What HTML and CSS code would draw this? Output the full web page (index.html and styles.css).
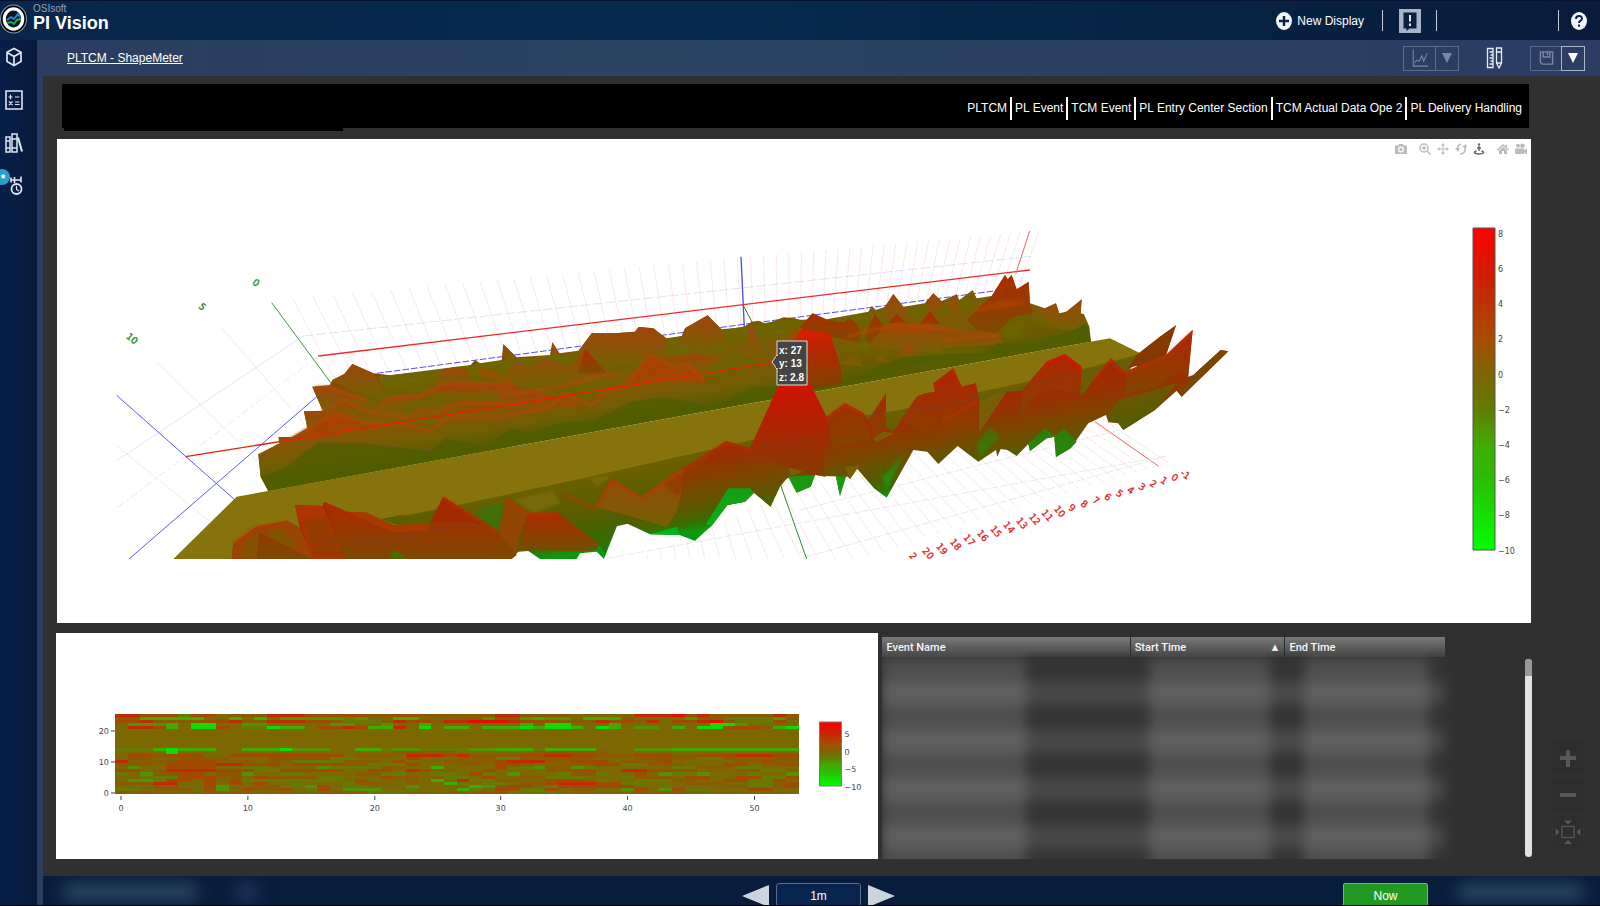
FILE: index.html
```html
<!DOCTYPE html>
<html lang="en">
<head>
<meta charset="utf-8">
<title>PI Vision</title>
<link rel="stylesheet" href="styles.css">
</head>
<body>
<div class="app">
  <header class="topbar">
    <svg class="logo" viewBox="0 0 28 30" aria-hidden="true">
      <ellipse cx="13.500" cy="15" rx="13.500" ry="14.500" fill="#8a9aa8"/>
      <ellipse cx="13.500" cy="15" rx="12.500" ry="13.500" fill="#000"/>
      <ellipse cx="13.500" cy="15" rx="10.800" ry="11.800" fill="#fff"/>
      <ellipse cx="13.500" cy="15" rx="7.600" ry="8.400" fill="#0b1424"/>
      <path d="M7 16l4-3 3 2 4-5 2 3" fill="none" stroke="#2f8be0" stroke-width="1.800"/>
      <path d="M7 19l4-1 3 2 3-4 4-1" fill="none" stroke="#22b04a" stroke-width="2"/>
    </svg>
    <div class="brand"><span class="brand-small">OSIsoft</span><span class="brand-name">PI Vision</span></div>
    <div class="topbar-actions">
      <button class="new-display">
        <svg viewBox="0 0 16 18"><ellipse cx="8" cy="9" rx="8" ry="9" fill="#f2f5f8"/><path d="M8 4v10M3 9h10" stroke="#0a2345" stroke-width="2.400"/></svg>
        New Display
      </button>
      <span class="rule"></span>
      <button class="alert" aria-label="Messages">
        <svg viewBox="0 0 22 24"><path d="M0 0h22v24H0z" fill="#a9b5c4"/><path d="M4.500 3.500h13v16h-7l-3 2.500v-2.500h-3z" fill="#0a2140"/><path d="M11 6v6.500M11 14.500v2.500" stroke="#e6ebf2" stroke-width="2"/></svg>
      </button>
      <span class="rule"></span>
      <span class="rule rule-far"></span>
      <button class="help" aria-label="Help">
        <svg viewBox="0 0 16 18"><ellipse cx="8" cy="9" rx="8" ry="9" fill="#f2f5f8"/><path d="M5 7c0-4 6-4 6-.500 0 2-3 2-3 4.500M8 12.500v2.200" fill="none" stroke="#0a2345" stroke-width="2"/></svg>
      </button>
    </div>
  </header>

  <div class="body">
    <nav class="rail" aria-label="Panels">
      <button aria-label="Assets"><svg viewBox="0 0 18 20"><path d="M9 1.500l7 3.800v9.200l-7 4-7-4V5.300zM2 5.500l7 4 7-4M9 9.500v9" fill="none" stroke="#dfe7f2" stroke-width="1.700"/></svg></button>
      <button aria-label="Calculations"><svg viewBox="0 0 18 20"><path d="M1 1h16v18H1z" fill="none" stroke="#dfe7f2" stroke-width="1.600"/><path d="M3.500 7h4M5.500 4.800v4.400M10 7h4.500M4 11.500l3.500 3.500M7.500 11.500L4 15M10 12h4.500M10 14.500h4.500" stroke="#dfe7f2" stroke-width="1.200"/></svg></button>
      <button aria-label="Library"><svg viewBox="0 0 18 20"><path d="M1 4h4v15H1zM7 1h5v18H7zM1 8h4M7 6h5M7 15h5M1 15h4" fill="none" stroke="#dfe7f2" stroke-width="1.500"/><path d="M13 4.500l4 14" stroke="#dfe7f2" stroke-width="2"/></svg></button>
      <button class="events" aria-label="Events"><svg viewBox="0 0 18 20"><path d="M6 1.500v5M16 .500v6M6 4h10M9.500 1v6" stroke="#dfe7f2" stroke-width="1.600"/><circle cx="11.500" cy="13" r="5" fill="none" stroke="#dfe7f2" stroke-width="1.800"/><path d="M11.500 10v3.500l2.500 1.500" fill="none" stroke="#dfe7f2" stroke-width="1.200"/></svg><span class="badge">*</span></button>
    </nav>

    <main class="workspace">
      <div class="toolbar">
        <a class="crumb" href="#">PLTCM - ShapeMeter</a>
        <div class="split dim">
          <button aria-label="Trend"><svg viewBox="0 0 20 20"><path d="M2.500 0v18.500H19M4 15l2-3 3 1 3-6 2 6 4-9" fill="none" stroke="currentColor" stroke-width="1.200"/></svg></button>
          <button aria-label="Trend options"><svg viewBox="0 0 10 10"><path d="M0 0h10L5 10z" fill="currentColor"/></svg></button>
        </div>
        <button class="design" aria-label="Design mode"><svg viewBox="0 0 18 22"><path d="M1.500 1.500h5.500v19H1.500zM3.500 5H7M4.500 8H7M3.500 11H7M4.500 14H7M3.500 17H7M10.500 1h5v15l-2.500 5-2.500-5zM10.500 5h5M10.500 16h5" fill="none" stroke="#e6edf6" stroke-width="1.300"/></svg></button>
        <div class="split save">
          <button class="dim" aria-label="Save"><svg viewBox="0 0 16 16"><path d="M1.500 1.500h13v13h-11l-2-2zM4.500 1.500v5.500h7V1.500M9 2v3" fill="none" stroke="currentColor" stroke-width="1.500"/></svg></button>
          <button class="save-more" aria-label="Save options"><svg viewBox="0 0 10 10"><path d="M0 0h10L5 10z" fill="currentColor"/></svg></button>
        </div>
      </div>

      <div class="canvas">
        <nav class="links" aria-label="Displays">
          <a href="#">PLTCM</a><a href="#">PL Event</a><a href="#">TCM Event</a><a href="#">PL Entry Center Section</a><a href="#">TCM Actual Data Ope 2</a><a href="#">PL Delivery Handling</a>
        </nav>

        <section class="panel surface" aria-label="Shape surface">
          <div class="modebar">
            <button class="apart" aria-label="Download"><svg viewBox="0 0 12 12"><path d="M0 2.500h3l1-1.500h4l1 1.500h3v8.500H0z" fill="#bbb"/><circle cx="6" cy="6.500" r="3" fill="#fff"/><circle cx="6" cy="6.500" r="1.700" fill="#bbb"/></svg></button>
            <button aria-label="Zoom"><svg viewBox="0 0 12 12"><circle cx="5" cy="5" r="4" fill="none" stroke="#bbb" stroke-width="1.500"/><path d="M3 5h4M5 3v4M8 8l3.500 3.500" stroke="#bbb" stroke-width="1.500"/></svg></button>
            <button aria-label="Pan"><svg viewBox="0 0 12 12"><path d="M6 1v10M1 6h10" stroke="#bbb"/><path d="M6 0l2 2.500H4zM6 12l2-2.500H4zM0 6l2.500-2v4zM12 6L9.500 4v4z" fill="#bbb"/></svg></button>
            <button aria-label="Orbit"><svg viewBox="0 0 12 12"><path d="M6 1C2 2 2 6 3 8M5 11c4 0 6-3 5-7" fill="none" stroke="#bbb" stroke-width="1.700"/><path d="M0 5l3 4 2-4zM7 4l4-3 1 4zM5 1h4" fill="#bbb"/></svg></button>
            <button class="apart" aria-label="Turntable"><svg viewBox="0 0 12 12"><circle cx="6" cy="1.500" r="1.200" fill="#666"/><path d="M6 3v5M4 5h4" stroke="#666" stroke-width="1.500"/><path d="M3.500 8C0 9 1 11 6 11s6-2 2.500-3" fill="none" stroke="#666" stroke-width="1.500"/></svg></button>
            <button aria-label="Reset"><svg viewBox="0 0 12 12"><path d="M6 1L0 6.500l1 1L6 3l5 4.500 1-1-2-2V1.500H8.500v1.800zM6 4L2 7.500V11h3V8h2v3h3V7.500z" fill="#bbb"/></svg></button>
            <button aria-label="Reset camera"><svg viewBox="0 0 12 12"><circle cx="3" cy="2.800" r="2" fill="#bbb"/><circle cx="7.500" cy="2.800" r="2.300" fill="#bbb"/><path d="M0 5.500h9v1.500l3-1.500v6L9 9.500V11H0z" fill="#bbb"/></svg></button>
          </div>
          <svg class="plot" viewBox="57 139 1474 484" role="img" aria-label="3D surface of shape deviation">
            <defs>
              <clipPath id="scene"><path d="M0 0H3400V1017H0z"/></clipPath>
              <filter id="soft" x="-20%" y="-20%" width="140%" height="140%"><feGaussianBlur stdDeviation="5"/></filter>
              <linearGradient id="bar" x1="0" y1="0" x2="0" y2="1"><stop offset="0" stop-color="#f00"/><stop offset=".16" stop-color="#cc2000"/><stop offset=".34" stop-color="#a84c00"/><stop offset=".46" stop-color="#7b6600"/><stop offset=".56" stop-color="#627c00"/><stop offset=".68" stop-color="#3fae00"/><stop offset=".76" stop-color="#30b800"/><stop offset="1" stop-color="#0f0"/></linearGradient>
              <linearGradient id="rear" gradientUnits="userSpaceOnUse" x1="0" y1="600" x2="53" y2="894"><stop offset="0" stop-color="#884600"/><stop offset=".3" stop-color="#7a5c06"/><stop offset=".6" stop-color="#7e5a06"/><stop offset="1" stop-color="#545c00"/></linearGradient>
              <linearGradient id="ridge" gradientUnits="userSpaceOnUse" x1="0" y1="690" x2="37" y2="900"><stop offset="0" stop-color="#a84200"/><stop offset=".35" stop-color="#8a5406"/><stop offset=".65" stop-color="#705e04"/><stop offset="1" stop-color="#4c5a00"/></linearGradient>
              <linearGradient id="front" gradientUnits="userSpaceOnUse" x1="0" y1="960" x2="51" y2="1245"><stop offset="0" stop-color="#ac2200"/><stop offset=".3" stop-color="#983000"/><stop offset=".55" stop-color="#784800"/><stop offset=".75" stop-color="#5c5800"/><stop offset=".9" stop-color="#3c6c00"/><stop offset="1" stop-color="#0a9a12"/></linearGradient>
              <linearGradient id="red" x1="0" y1="0" x2="0" y2="1"><stop offset="0" stop-color="#b62400"/><stop offset="1" stop-color="#7c4800"/></linearGradient>
              <linearGradient id="hot" x1="0" y1="0" x2="0" y2="1"><stop offset="0" stop-color="#f01000"/><stop offset=".3" stop-color="#c81400"/><stop offset="1" stop-color="#843c00"/></linearGradient>
              <linearGradient id="rust" x1="0" y1="0" x2="0" y2="1"><stop offset="0" stop-color="#a04408"/><stop offset="1" stop-color="#746206"/></linearGradient>
              <linearGradient id="moss" gradientUnits="userSpaceOnUse" x1="0" y1="1030" x2="36" y2="1230"><stop offset="0" stop-color="#6a6000"/><stop offset=".6" stop-color="#545e00"/><stop offset="1" stop-color="#306e04"/></linearGradient>
              <linearGradient id="green" x1="0" y1="0" x2="0" y2="1"><stop offset="0" stop-color="#2f7c08"/><stop offset="1" stop-color="#00b61c"/></linearGradient>
            </defs>
            <g transform="translate(100 220) scale(.33333)">
              <g clip-path="url(#scene)" fill="none" stroke-width="2">
                <g id="grid" stroke="#f8d6dc" stroke-dasharray="14 2"></g>
                <path d="M365 323L620 620M168 423L480 730M50 677L330 905" stroke="#dde6dc"/>
                <path d="M50 722L610 348" stroke="#d5d5ee"/>
                <path d="M52 863L660 405" stroke="#dbe0cf" stroke-dasharray="24 10 8 10"/>
                <path d="M610 348L2800 108" stroke="#d0d0f6" stroke-dasharray="30 8"/>
                <path d="M830 460L2690 212" stroke="#5050f0" stroke-width="3" stroke-dasharray="20 6"/>
                <path d="M515 248L695 492" stroke="#3c9a3c" stroke-width="3"/>
                <path d="M50 526L405 840M87 1017L700 487" stroke="#5a5af0" stroke-width="3"/>
                <path d="M655 408L2790 150" stroke="#f02828" stroke-width="4"/>
                <path d="M2789 33L2748 160M2985 605L3175 738" stroke="#ee6a6a" stroke-width="3"/>
                <path d="M1520 1015L3200 708M2100 870L3060 630M2120 1010L3200 708" stroke="#dde0dc" stroke-dasharray="24 6"/>
                <path d="M1923 110L1933 325" stroke="#4a4af0" stroke-width="4"/>
                <path d="M2040 790L2120 1017" stroke="#2d8a2d" stroke-width="3"/>
              </g>
              <g clip-path="url(#scene)">
                <path fill="url(#rear)" d="M505 813L482 770 475 703 538 670 535 651 577 651 622 625 612 574 668 572 637 500 690 495 697 480 733 462 757 432 820 460 870 466 970 455 1110 437 1125 420 1140 430 1205 420 1210 373 1250 412 1350 405 1357 367 1378 400 1435 392 1475 340 1545 340 1605 335 1616 321 1660 325 1700 355 1745 348 1755 325 1823 286 1865 328 1930 322 1955 305 1975 302 2000 312 2050 292 2085 295 2115 305 2138 280 2180 298 2305 275 2315 258 2328 270 2355 260 2380 222 2410 260 2475 250 2500 220 2525 243 2570 223 2578 240 2618 210 2630 235 2675 228 2715 165 2723 178 2735 165 2750 208 2786 185 2790 250 2835 265 2868 250 2878 280 2920 270 2945 238 2942 280 2952 283 2968 320 2973 365z"/>
                <path fill="#6f6400" d="M835 466L870 466 1205 423 1440 395 1480 400 1700 356 1870 330 2050 300 2200 298 2420 262 2640 235 2620 270 2300 310 2100 340 1850 385 1400 440 1250 490 1000 490 880 520 845 500z"/>
                <g fill="url(#rust)">
                  <path d="M697 480L733 462 757 432 820 460 850 515 810 525 750 510z"/>
                  <path d="M637 500L690 498 800 540 830 565 725 538 668 572z"/>
                  <path d="M1000 495L1030 447 1070 440 1105 450 1120 492z"/>
                  <path d="M820 570L870 530 960 525 1030 488 1240 487 1300 550 1100 550 1050 575 960 565 880 595z"/>
                  <path d="M612 574L700 575 640 612 622 625z"/>
                  <path d="M668 572L730 537 800 572 930 590 960 566 1010 575 1080 545 1210 548 1290 510 1400 540 1380 600 1100 600 800 620z"/>
                  <path d="M1210 373L1250 412 1215 425zM1357 367L1380 402 1355 410z"/>
                  <path d="M1205 478L1240 427 1290 440 1330 414 1410 440 1455 386 1530 460 1480 490 1280 500z"/>
                  <path d="M1435 395L1475 340 1545 340 1605 335 1616 321 1660 325 1700 360 1690 410 1600 430 1520 440 1470 400z"/>
                  <path d="M1745 350L1755 325 1823 286 1865 330 1885 390 1760 400 1720 400z"/>
                  <path d="M1930 400L1955 305 2010 400 1990 420z"/>
                  <path d="M1680 420L1765 400 1850 415 1900 440 1810 465z"/>
                  <path d="M2300 370L2340 325 2400 312 2600 330 2700 340 2710 372 2530 385 2520 402 2320 385z"/>
                  <path d="M2380 222L2410 260 2440 300 2350 300 2355 260zM2500 220L2530 255 2500 290 2475 250zM2570 223L2578 290 2540 260zM2535 320L2560 290 2590 330z"/>
                  <path d="M2390 410L2420 365 2460 405zM2220 430L2265 405 2290 440zM2320 420L2345 405 2365 425z"/>
                  <path d="M2835 265L2868 250 2880 290 2945 238 2942 280 2968 320 2900 330 2800 310z"/>
                </g>
                <g filter="url(#soft)" fill="#6c6202" opacity=".85">
                  <path d="M850 515L960 490 1010 500 950 522 860 530 830 560 790 530zM740 560L790 575 780 585zM900 560L1010 520 1190 520 1200 540 1080 540 1000 565 930 580zM1130 470L1210 430 1200 480 1130 485z"/>
                  <path d="M1300 500L1480 495 1580 470 1560 490 1500 505 1460 540 1400 520zM1530 440L1600 435 1700 425 1680 440 1620 445 1530 460zM1820 440L1900 400 1960 420 2000 440 1900 455 1840 470z"/>
                  <path d="M2210 370L2290 385 2380 390 2360 410 2260 400 2230 410zM2440 400L2560 390 2700 385 2620 400 2480 410zM2700 290L2820 280 2860 320 2720 320z"/>
                </g>
                <g fill="url(#red)" opacity=".85">
                  <path d="M2100 320L2138 280 2180 300 2230 308 2250 295 2270 312 2295 370 2190 350 2120 340z"/>
                  <path d="M2290 360L2325 278 2350 320 2310 370zM2365 308L2390 283 2420 308zM2460 312L2490 272 2520 312z"/>
                  <path d="M2600 300L2675 228 2715 165 2723 178 2735 165 2750 208 2786 185 2790 250 2800 280 2740 290 2690 340 2630 330z"/>
                  <path d="M1435 460L1455 386 1520 460z"/>
                </g>
                <g filter="url(#soft)" opacity=".6">
                  <path fill="#6a6a00" d="M1700 400L1760 370 1770 410zM1830 400L1860 350 1880 400zM2270 390L2290 320 2310 390zM2700 330L2740 310 2780 350 2720 360z"/>
                  <path fill="#b84400" d="M1140 440L1240 480 1140 470zM2600 280L2700 240 2790 245 2740 260zM2350 320L2500 310 2500 330 2350 330z"/>
                </g>
                <path fill="#525c00" d="M2210 492L2400 415 2540 402 2650 400 2690 370 2790 372 2850 350 2910 335 2960 310 2973 365 2500 425z"/>
                <path fill="url(#ridge)" d="M505 813L482 770 475 703 560 660 622 625 700 575 800 605 920 612 990 632 1030 597 1080 585 1200 590 1350 560 1395 517 1480 555 1520 510 1580 490 1650 402 1715 435 1765 432 1820 495 1900 470 1980 450 2015 390 2060 380 2080 327 2185 340 2210 400 2225 490 2010 535z"/>
                <path fill="#b03c00" filter="url(#soft)" opacity=".65" d="M620 630L700 580 790 620 640 650zM1370 560L1395 525 1450 560zM1580 490L1650 410 1720 445 1790 445 1820 490 1680 480z"/>
                <path fill="none" stroke="#b04808" stroke-width="9" opacity=".8" filter="url(#soft)" d="M668 572L730 540 800 575 930 592 960 568 1010 575 1080 548 1210 550M825 568L870 533 960 528 1030 491 1240 490M565 662L622 628 700 580 800 608 920 615 990 635 1030 600 1080 588 1200 593 1350 563 1395 521 1475 555 1520 514 1580 492 1650 406 1715 438 1765 435 1815 490M645 503L690 502 800 543M1205 522L1290 515 1400 495 1500 465 1560 462M2240 350L2320 330 2400 315 2580 330M2530 360L2700 345"/>
                <path fill="#4f5c00" opacity=".7" d="M482 770L550 745 655 667 800 670 990 692 1035 655 1100 665 1150 675 1235 625 1290 635 1390 605 1480 602 1590 545 1690 530 1830 555 1900 525 1960 500 2030 500 2225 490 2010 535 505 813z"/>
                <path fill="none" stroke="#68562c" stroke-width="2" d="M482 770L550 745 655 667 800 670 990 692 1035 655 1100 665 1150 675 1235 625 1290 635 1390 605 1480 602 1590 545 1690 530 1830 555 1900 525 1960 500 2015 440"/>
                <path fill="url(#hot)" opacity=".75" d="M2080 370L2105 327 2190 340 2222 440 2225 492 2100 512z"/>
                <path stroke="#2d7a1e" stroke-width="3" d="M1932 260L2015 420"/>
                <path stroke="#e82000" stroke-width="4" d="M257 710L2015 428"/>

                <path fill="#86730c" d="M220 1017L410 830 3030 355 3125 402 3060 480 2650 560 1900 740 1000 960 900 1017z"/>
                <path fill="url(#moss)" d="M845 897L950 880 1060 858 1450 775 1850 685 2000 650 2300 585 2400 570 2620 520 2900 460 3110 405 3040 560 2700 640 2300 680 1900 840 1500 930 1180 1000 1000 960z"/>
                <path fill="#7c6c08" filter="url(#soft)" opacity=".8" d="M1240 840L1360 810 1380 850 1300 880zM1470 775L1540 765 1490 800zM2640 550L2710 515 2680 580z"/>
                <path fill="#38740a" filter="url(#soft)" opacity=".8" d="M1130 870L1200 850 1215 890 1192 935 1150 900zM1590 800L1700 740 1640 775z"/>

                <path fill="url(#front)" d="M395 1017L400 970 470 920 563 902 600 925 585 855 668 858 672 845 740 875 800 878 878 915 985 912 1030 830 1195 935 1220 833 1285 878 1372 878 1390 818 1485 862 1535 775 1625 830 1690 780 1750 745 1878 663 1950 685 2030 510 2180 590 2235 550 2290 580 2305 600 2358 520 2358 620 2380 635 2450 530 2475 520 2505 515 2500 490 2560 445 2585 500 2628 490 2637 540 2637 640 2665 580 2720 515 2765 512 2840 425 2895 402 2945 440 2945 530 2980 480 3033 415 3075 455 3110 440 3110 405 3180 350 3228 316 3198 405 3278 330 3265 470 3280 465 3362 390 3385 394 3245 530 3230 512 3165 570 3070 630 3055 610 3025 607 3018 585 2965 610 2912 685 2868 711 2863 650 2840 655 2790 693 2785 672 2750 708 2722 690 2702 687 2692 710 2688 690 2635 725 2573 678 2515 732 2482 695 2440 690 2360 833 2322 805 2270 745 2250 778 2235 760 2220 828 2205 757 2175 770 2145 765 2132 800 2090 818 2065 770 2040 800 2012 860 1962 818 1935 845 1882 855 1835 917 1818 912 1785 962 1740 945 1650 943 1558 900 1512 1017 1490 995 1440 1000 1430 1017 1320 1017 1285 993 1255 995 1235 1017z"/>
                <path fill="#9a4406" d="M395 1017L400 970 470 920 563 902 600 925 640 1017z"/>
                <path fill="#805406" filter="url(#soft)" d="M420 1010L440 960 540 925 590 970 560 990 480 930 465 1010z"/>
                <path fill="url(#red)" d="M470 1017L478 937 640 1017zM672 845L740 875 880 935 985 935 1030 830 1195 935 1250 1005 1235 1017 730 1017z"/>
                <path fill="#b03404" d="M585 855L668 858 735 1017 635 1017z"/>
                <path fill="#8c3c04" filter="url(#soft)" opacity=".7" d="M610 900L680 890 730 1010 640 1010z"/>
                <path fill="#a83a00" d="M740 875L800 878 878 915 985 912 990 930 880 938z"/>
                <path fill="#a02600" opacity=".7" d="M1000 905L1030 830 1195 935 1120 905z"/>
                <path fill="#3c7a00" filter="url(#soft)" d="M875 990L925 1015 875 1015z"/>
                <path fill="#5c5e00" d="M845 897L900 885 945 895 930 910 878 912zM940 905L960 885 1005 870 985 910z"/>
                <path fill="#914604" d="M1195 940L1220 833 1285 878 1255 960 1250 1000z"/>
                <path fill="url(#red)" d="M1255 992L1285 878 1372 878 1500 965 1490 990 1440 995 1285 990z" opacity=".85"/>
                <path fill="url(#moss)" d="M1372 878L1390 818 1485 862 1540 870 1600 905 1558 895 1515 1000 1490 965z" opacity=".9"/>
                <path fill="url(#rust)" d="M1488 862L1535 775 1625 830 1690 780 1750 745 1740 860 1700 920 1560 880z"/>
                <path fill="url(#front)" d="M1720 910L1750 800 1820 730 1878 663 1950 685 2035 770 2012 860 1962 818 1935 845 1882 855 1835 917 1785 962 1740 945z"/>
                <path fill="#8e3a00" filter="url(#soft)" opacity=".7" d="M1690 790L1830 700 1800 760 1730 830z"/>
                <path fill="url(#green)" d="M1885 805L1950 805 1962 818 1935 845 1882 855 1835 917 1818 912zM2065 770L2145 765 2132 800 2090 818zM2205 757L2240 765 2220 828zM2863 650L2890 625 2930 665 2912 685 2868 711zM2790 693L2785 672 2835 625 2865 650 2840 655zM1650 943L1740 945 1730 920z"/>
                <path fill="url(#hot)" d="M1950 685L2030 510 2085 420 2125 480 2180 590 2185 765 2140 765 2060 745z"/>
                <path fill="url(#front)" d="M2180 590L2235 550 2290 580 2320 655 2270 745 2250 770 2170 768z"/>
                <path fill="url(#red)" opacity=".7" d="M2180 590L2235 550 2290 580 2315 660 2200 680zM2305 600L2358 520 2358 620 2325 655zM2500 490L2560 445 2585 500 2628 490 2630 540 2525 605zM2525 605L2637 540 2637 635 2540 640zM2400 600L2450 530 2505 515 2520 600 2470 640z"/>
                <path fill="url(#green)" opacity=".6" filter="url(#soft)" d="M2320 690L2350 770 2410 700 2360 810zM2630 670L2670 620 2700 650 2640 710z"/>
                <path fill="#795e06" d="M2637 640L2640 555 2720 515 2690 560zM2320 655L2350 635 2385 640 2330 665zM2235 740L2280 735 2250 778zM2065 742L2110 755 2070 768z"/>
                <path fill="url(#red)" d="M2765 512L2840 425 2895 402 2945 440 2935 520 2850 505 2800 530 2760 590z" opacity=".8"/>
                <path fill="#c81c00" d="M2840 425L2895 402 2945 440 2943 460 2895 412 2850 432z"/>
                <path fill="url(#moss)" opacity=".8" d="M2945 440L2955 500 2940 530zM3020 590L3060 540 3130 520 3230 490 3165 570 3070 630 3055 610z"/>
                <path fill="#853800" d="M3085 445L3110 405 3180 350 3228 316 3198 405 3150 425z"/>
                <path fill="url(#red)" d="M3075 455L3198 405 3278 330 3265 460 3240 450 3170 500 3080 520z" opacity=".85"/>
                <path fill="#7a4604" d="M3245 515L3280 465 3362 390 3385 394 3245 530 3230 512z"/>
                <g fill="none" stroke="#c03400" stroke-width="6" opacity=".75" filter="url(#soft)">
                  <path d="M1390 822L1485 866 1535 780 1625 834 1878 668 1950 690M2180 592L2235 555 2290 585M2980 482L3033 420 3075 460 3198 410 3275 338M2525 605L2632 545M1220 838L1285 882 1372 882M1030 835L1190 935M400 970L470 920 563 905"/>
                </g>
                <path fill="none" stroke="#585060" stroke-width="2" opacity=".6" d="M630 955L740 965 860 960 1100 912 1200 920M1990 680L2120 660M2280 590L2560 550 2900 470 3240 400"/>
              </g>
              <g class="axis-green"><text transform="translate(469 188) rotate(38)">0</text><text transform="translate(308 260) rotate(42)">5</text><text transform="translate(97 355) rotate(40)">10</text></g>
              <g class="axis-red" id="xlabels" clip-path="url(#scene)"></g>
            </g>
            <path d="M772 362l5-7v14zM777 341h30v44h-30z" fill="#444" stroke="#ddd"/>
            <path d="M777 356v12" stroke="#444" stroke-width="2"/>
            <g class="tip"><text x="779" y="354">x: 27</text><text x="779" y="367">y: 13</text><text x="779" y="381">z: 2.8</text></g>
            <path d="M1473 228h22v322h-22z" fill="url(#bar)" stroke="#555"/>
            <g class="ticks"><text x="1498" y="237">8</text><text x="1498" y="272">6</text><text x="1498" y="307">4</text><text x="1498" y="342">2</text><text x="1498" y="378">0</text><text x="1498" y="413">−2</text><text x="1498" y="448">−4</text><text x="1498" y="483">−6</text><text x="1498" y="518">−8</text><text x="1498" y="554">−10</text></g>
          </svg>
        </section>

        <div class="lower">
          <section class="panel heat" aria-label="Shape heat map">
            <svg class="plot" viewBox="56 633 823 226" role="img" aria-label="Heat map">
              <g id="heat" transform="translate(115 714) scale(12.667 3.077)" shape-rendering="crispEdges"></g>
              <path d="M111 731h4M111 762h4M111 793h4M121 796v4M248 796v4M375 796v4M501 796v4M628 796v4M755 796v4" stroke="#444"/>
              <g class="ticks end"><text x="109" y="734">20</text><text x="109" y="765">10</text><text x="109" y="796">0</text></g>
              <g class="ticks mid"><text x="121" y="811">0</text><text x="248" y="811">10</text><text x="375" y="811">20</text><text x="501" y="811">30</text><text x="628" y="811">40</text><text x="755" y="811">50</text></g>
              <path d="M820 722h22v64h-22z" fill="url(#bar)" stroke="#777"/>
              <g class="ticks"><text x="845" y="737">5</text><text x="845" y="755">0</text><text x="845" y="772">−5</text><text x="845" y="790">−10</text></g>
            </svg>
          </section>
          <section class="events-box">
            <div class="events-scroll">
              <table>
                <thead><tr><th class="c1">Event Name</th><th class="c2">Start Time <span>▲</span></th><th class="c3">End Time</th></tr></thead>
                <tbody>
                  <tr><td><i></i></td><td><i></i></td><td><i></i></td></tr>
                  <tr><td><i></i></td><td><i></i></td><td><i></i></td></tr>
                  <tr><td><i></i></td><td><i></i></td><td><i></i></td></tr>
                  <tr><td><i></i></td><td><i></i></td><td><i></i></td></tr>
                  <tr><td><i></i></td><td><i></i></td><td><i></i></td></tr>
                  <tr><td><i></i></td><td><i></i></td><td><i></i></td></tr>
                  <tr><td><i></i></td><td><i></i></td><td><i></i></td></tr>
                  <tr><td><i></i></td><td><i></i></td><td><i></i></td></tr>
                  <tr><td><i></i></td><td><i></i></td><td><i></i></td></tr>
                </tbody>
              </table>
            </div>
            <div class="scrollbar"><div class="thumb"></div></div>
          </section>
        </div>

        <div class="zoomer">
          <button aria-label="Zoom in"><svg viewBox="0 0 26 26"><path d="M13 5v17M5 13h16" stroke="#666" stroke-width="4"/></svg></button>
          <button aria-label="Zoom out"><svg viewBox="0 0 26 26"><path d="M5 13h16" stroke="#666" stroke-width="4"/></svg></button>
          <button aria-label="Fit"><svg viewBox="0 0 26 26"><rect x="7" y="7.500" width="12" height="11" fill="none" stroke="#666" stroke-width="1.300"/><path d="M9 1.500h8l-4 4zM9 25h8l-4-4zM.500 9v8l4-4zM25.500 9v8l-4-4z" fill="#666"/></svg></button>
        </div>
      </div>

      <footer class="timebar">
        <div class="time-left"><span class="haze"></span><span class="haze dot"></span></div>
        <div class="stepper">
          <button class="step" aria-label="Back"><svg viewBox="0 0 27 22"><path d="M0 11L27 0v22z" fill="#ccd5de"/></svg></button>
          <button class="span">1m</button>
          <button class="step" aria-label="Forward"><svg viewBox="0 0 27 22"><path d="M27 11L0 0v22z" fill="#ccd5de"/></svg></button>
        </div>
        <div class="time-right"><button class="now">Now</button><span class="haze"></span></div>
      </footer>
    </main>
  </div>
</div>
<script src="charts.js"></script>
</body>
</html>
```

FILE: styles.css
```css
* { box-sizing: border-box; }
body { margin: 0; background: #000; font: 12px "Liberation Sans", Arial, sans-serif; color: #fff; }
button { margin: 0; padding: 0; border: 0; background: none; color: inherit; font: inherit; }
svg { display: block; }
a { color: inherit; text-decoration: none; }

.app { height: 100vh; min-height: 600px; display: flex; flex-direction: column; border-bottom: 1px solid #000; }
.topbar { flex: none; height: 40px; display: flex; align-items: center; background: linear-gradient(90deg, #08264a, #062a4e 45%, #081c3a); border-top: 1px solid #051230; }
.logo { width: 28px; height: 30px; margin-top: -4px; }
.brand { display: flex; flex-direction: column; margin: -5px 0 0 5px; }
.brand-small { font-size: 10px; line-height: 11px; color: #93a3b5; }
.brand-name { font-size: 18px; line-height: 19px; font-weight: bold; }
.topbar-actions { margin-left: auto; display: flex; align-items: center; padding-right: 13px; }
.new-display { display: flex; align-items: center; gap: 5px; margin-right: 18px; }
.new-display svg, .help svg { width: 16px; height: 18px; }
.rule { width: 1px; height: 21px; background: #c5cedb; }
.rule-far { margin-left: 121px; }
.alert { margin: 0 15px 0 16px; }
.alert svg { width: 22px; height: 24px; }
.help { margin-left: 12px; }

.body { flex: 1; min-height: 0; display: flex; }
.rail { flex: none; width: 37px; padding-top: 7px; display: flex; flex-direction: column; gap: 23px; background: linear-gradient(90deg, #08204a, #071a38); }
.rail button { position: relative; width: 28px; height: 20px; padding-left: 5px; }
.rail svg { width: 18px; height: 20px; }
.badge { position: absolute; left: -6px; top: -7px; width: 16px; height: 16px; border-radius: 50%; background: #2a9fc9; font-size: 12px; font-weight: bold; line-height: 20px; padding-left: 2px; }

.workspace { flex: 1; min-width: 0; display: flex; flex-direction: column; }
.toolbar { flex: none; height: 36px; display: flex; align-items: center; padding: 0 15px 0 30px; background: linear-gradient(90deg, #2b3d60, #2a4462 40%, #2b3d62); }
.crumb { margin-right: auto; text-decoration: underline; }
.split { display: flex; height: 25px; border: 1px solid #5a6d8c; }
.split button { display: grid; place-items: center; width: 31px; }
.split button + button { width: 23px; border-left: 1px solid #5a6d8c; }
.split svg { width: 10px; height: 10px; }
.split button:first-child svg { width: 18px; height: 19px; }
.split.save button:first-child svg { width: 15px; height: 16px; }
.dim { color: #7788a2; }
.design { margin: 0 26px 0 27px; }
.design svg { width: 18px; height: 22px; }
.split.save .save-more { margin: -1px; width: 24px; border: 1px solid #a9b6c9; }

.canvas { position: relative; flex: 1; min-height: 0; border-left: 6px solid #2c3e60; padding: 8px 69px 17px 14px; background: #303030; display: flex; flex-direction: column; }
.links { position: relative; flex: none; height: 44px; margin: 0 2px 11px 5px; padding: 4px 7px 0 0; background: #000; display: flex; align-items: center; justify-content: flex-end; }
.links::after { content: ""; position: absolute; left: 2px; top: 44px; width: 19%; height: 3px; background: #000; }
.links a { line-height: 23px; padding: 0 3px; white-space: nowrap; }
.links a + a { border-left: 2px solid #fff; }
.links a:last-child { padding-right: 0; }
.panel { background: #fff; }
.plot { width: 100%; height: 100%; }
.surface { position: relative; flex: 484 1 0; min-height: 0; }
.modebar { position: absolute; top: 4px; right: 4px; display: flex; gap: 6px; }
.modebar button { width: 12px; height: 12px; }
.modebar .apart { margin-right: 6px; }
.lower { flex: 226 1 0; min-height: 0; margin: 10px -1px 0; display: flex; gap: 4px; }
.heat { flex: 823 1 0; }
.events-box { position: relative; flex: 650 1 0; display: flex; justify-content: space-between; padding-top: 4px; }
.events-scroll { width: 88%; overflow: hidden; }
.events-scroll table { width: 98.5%; table-layout: fixed; border-collapse: collapse; }
th { height: 20px; padding: 0 4px; text-align: left; font: 500 11px Roboto, "Liberation Sans", sans-serif; background: linear-gradient(#787878, #464646); }
th + th { border-left: 1px solid #2b2b2b; }
th span { float: right; }
.c1 { width: 44%; }
.c2 { width: 27.5%; }
tbody { filter: blur(6px); }
td { height: 24px; padding: 0; background: #343434; }
tr:nth-child(even) td { background: #484848; }
td i { display: block; height: 24px; background: rgba(255, 255, 255, .13); width: 58%; }
td + td i { width: 78%; margin-left: 12%; }
.scrollbar { width: 7px; margin: 22px 0 2px; border-radius: 4px; background: #e2e2e2; }
.thumb { height: 17px; border-radius: 4px 4px 0 0; background: #989898; }
.zoomer { position: absolute; right: 17px; bottom: 28px; display: flex; flex-direction: column; gap: 5px; }
.zoomer button { width: 30px; height: 32px; display: grid; place-items: center; background: #2d2d2d; border-radius: 2px; }
.zoomer svg { width: 26px; height: 26px; opacity: .75; }

.timebar { flex: none; height: 29px; margin-left: 6px; padding-top: 7px; display: grid; grid-template-columns: 699fr 153px 705fr; background: #081c3c; overflow: hidden; box-shadow: -6px 0 #2c3e60; }
.time-left { display: flex; gap: 40px; padding-left: 20px; }
.haze { width: 134px; height: 18px; background: #28485c; filter: blur(8px); }
.haze.dot { width: 20px; background: #24385a; }
.stepper { display: flex; gap: 7px; }
.step svg { width: 27px; height: 22px; }
.span { width: 85px; height: 26px; border: 1px solid #566c90; border-radius: 3px; background: #0a2450; }
.time-right { display: flex; justify-content: flex-end; gap: 30px; padding-right: 17px; }
.now { width: 85px; height: 26px; border: 1px solid #6fbf6c; border-radius: 2px; background: #229a22; }
.time-right .haze { width: 125px; }

text { font-family: "DejaVu Sans", Verdana, sans-serif; }
.ticks { font-size: 8px; fill: #444; }
.end { text-anchor: end; }
.mid { text-anchor: middle; }
.tip text { font: bold 10px "Liberation Sans", Arial, sans-serif; fill: #fff; }
.axis-green, .axis-red { font-size: 28px; text-anchor: middle; dominant-baseline: central; fill: #1a8a1a; stroke: #1a8a1a; }
.axis-red { fill: #e02020; stroke: #e02020; }
```

FILE: charts.js
```js
const NS = "http://www.w3.org/2000/svg";
function add(parent, name, attrs, text) {
  const el = document.createElementNS(NS, name);
  for (const key in attrs) el.setAttribute(key, attrs[key]);
  if (text) el.textContent = text;
  parent.appendChild(el);
}

/* Run-length rows, top (25) to bottom (0); each letter is a colour step. */
const steps = { ".": "#7b6800", a: "#8a5a00", b: "#a04a00", c: "#c02a00", d: "#e80c00", e: "#687800", f: "#559200", g: "#40ac00", h: "#10dc00" };
const rows = [
  "2c3b1e2b1.3a3c5b2a2b6a2c4a5.3c1d1b1c5a1c1a",
  "2a5g2.1g1.1g1.5f1e1f2.2g3.2a1f2a1f1g2f1.3g1a3.1e1f2a4e1f1a",
  "2b1c4a2b1c2a3c2b1a3e1a1c2b1a2c2d1d1c3b3a1c2b1a1c1.1b1b1c1d1a3e1b1.1b",
  "1.3f1g1.2h2.2f5.2f2.1f2.1g7.1g1.2h3.1g7.2h1f5.",
  "1.2c1b1g1.2h1b1.2e1h2g1.2b1c1b2g1c1.1h1.2g1.3g1h1g2h1g1.1h1g1.2f1.1g1.2h3b1a1g1h",
  "54.", "54.", "54.", "54.", "54.", "54.",
  "3e1g1h3g2.3g1h3f2.2g1e2f4e2f3g1e4g3.3f10g",
  "4.1h17.5a6.6a15.",
  "1.2b1a3b2.9b1.3a1.3c1b1c4a2b2c2b3a3b2a3b3c2b",
  "1.2a2.4a3.5a2e4.1b3.3a2e6a3.5a2e6a",
  "1c4a3b3a1.2a4e3a1.1b3.4a1b3c2a3b1.3a1b5.2a1b2a1.1b",
  "3a1.4b2c3b1.4b2a3e1b3.2a1.2b1a2.3a2b2e3a3.2b1.2a2b",
  "1.1f2.4b2.2e4.1f4e2a2.1g4.1b2e1f2a1f1e6.2e3a2e3.",
  "2b1.1a4c3b2e2b3b2.2b1.1c1b2a2.1b4.2a2b2.2c2b1a1b3.2a2e2a",
  "1e1.1f2a2b1.2a1f2.2e4.2a2e2.2e1.1b1e1.1f3.1e2a1e2.1b1.1f2e1f3.1e2.2f",
  "2.3e3b2a1.1b4a2e3.1b2a1.1a2e1.1b2.2a3e3.1e3a1.2b2.2b2e1b1.2a",
  "1.2f1e2b1.1b1.1b8e1.1b3.1a1.1g1.1c2e2a2.3b1a1e2.3e2a2.2b2e1b1.",
  "3a2c2.1b1.1b1.1b2.1e3.1e2a2.1a2.1g1e1.2e1.2a1b3c2b2e3.3a2.2e1a2b",
  "3.2a2.1b1f2.2a2e1f1b1.2e3.1f4.1g1f1a2b1.1e2b3b1b2.1e4.2a2e1a1b1a",
  "2e1.3a1.1b1f1.1b2a1b1.1e1b1.3f2.1e3.1g1e1.2b2e1b1.2a2.1f1b1.1f1b2e3.2b",
  "3a4.3a6.4a3e5.3a4e6.4a9."
];
const heat = document.getElementById("heat");
add(heat, "rect", { x: 0, y: 0, width: 54, height: 26, fill: steps["."] });
rows.forEach((row, y) => {
  let x = 0;
  for (const [, count, step] of row.matchAll(/(\d+)(\D)/g)) {
    const width = Math.min(+count, 54 - x);
    if (step !== "." && width > 0) add(heat, "rect", { x, y, width, height: 1, fill: steps[step] });
    x += width;
  }
});

/* Perspective grid: spacing shrinks with distance. */
const grid = document.getElementById("grid");
for (let i = 0; i < 55; i++) {
  const k = i / (1 + 0.00873 * i);
  const x1 = 579 + 61 * k, y1 = 236 - 5.55 * k;
  const x2 = 700 + 56 * k, y2 = 470 - 7.2 * k;
  add(grid, "path", { d: `M${x1} ${y1}L${x2} ${y2}` });
}
const labels = document.getElementById("xlabels");
for (let i = -1; i < 42; i++) {
  const x = 3225 - 32 * i - 0.25 * i * i;
  const y = 772 + 9 * i + 0.12 * i * i;
  const slope = Math.max(-0.05, 1.43 - (3175 - x) * 0.00095);
  const bx = x - 50, by = y - 34;
  add(grid, "path", { d: `M${bx} ${by}L${bx - 330 * slope * 0.7} ${by - 230}` });
  if (i < 21) add(labels, "text", { transform: `translate(${x} ${y}) rotate(${i > 9 ? 50 : 35})` }, String(i));
}
add(labels, "text", { transform: "translate(2440 1008) rotate(50)" }, "2");
```
